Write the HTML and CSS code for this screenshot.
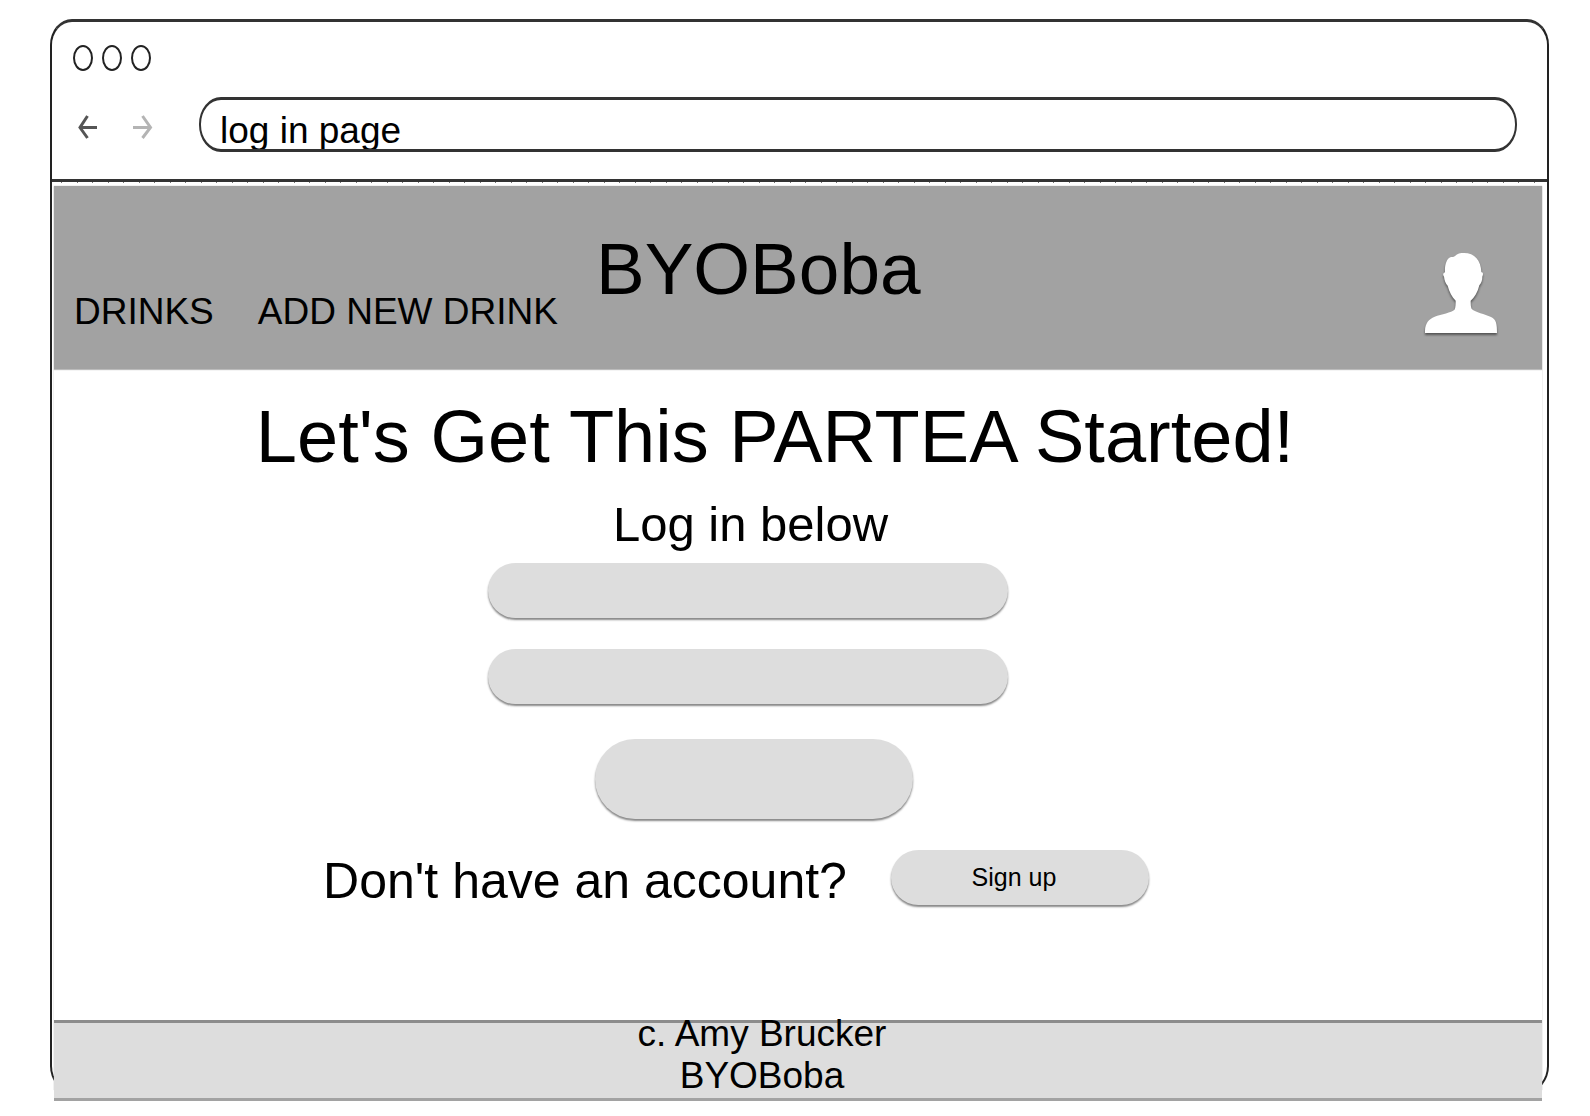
FILE: index.html
```html
<!DOCTYPE html>
<html lang="en">
<head>
<meta charset="utf-8">
<meta name="viewport" content="width=device-width, initial-scale=1">
<title>BYOBoba</title>
<link rel="stylesheet" href="styles.css">
</head>
<body>
<div class="window">
  <div class="chrome">
    <div class="dots"><span class="dot"></span><span class="dot"></span><span class="dot"></span></div>
    <div class="toolbar">
      <button class="arrow" type="button" aria-label="Back">
        <svg width="20" height="24" viewBox="0 0 20 24"><path d="M19 12.500H2M9.500 1L2 12.500L9.500 23" fill="none" stroke="#555" stroke-width="3"/></svg>
      </button>
      <button class="arrow" type="button" aria-label="Forward">
        <svg width="20" height="24" viewBox="0 0 20 24"><path d="M0 12.500H18M9.500 1L17.500 12.500L9.500 23" fill="none" stroke="#b4b4b4" stroke-width="3"/></svg>
      </button>
      <input class="address" type="text" value="log in page" aria-label="Address">
    </div>
  </div>
  <div class="ticks"></div>
  <div class="page">
    <header class="header">
      <nav class="nav">
        <a href="#">DRINKS</a>
        <a href="#">ADD NEW DRINK</a>
      </nav>
      <div class="brand">BYOBoba</div>
      <a class="profile" href="#" aria-label="Profile">
        <svg width="72" height="80" viewBox="105 98 216 241" preserveAspectRatio="none"><path fill="#fff" d="M105 339C104 312 114 298 134 290C154 282 184 278 194 268C197 262 197 250 197 242C186 231 178 216 173 197C167 190 163 180 162 169C158 164 159 158 165 156C164 136 169 116 181 111C186 109 190 112 195 107C202 99 211 98 222 98C254 98 273 120 274 156C280 156 280 162 277 169C277 180 274 190 268 195C263 216 253 232 242 242C242 252 242 260 245 267C257 278 284 282 303 291C319 299 321 312 321 339Z"/></svg>
      </a>
    </header>
    <main class="main">
      <h1 class="headline">Let's Get This PARTEA Started!</h1>
      <form class="login">
        <h2 class="prompt">Log in below</h2>
        <input class="field" type="text" aria-label="Username">
        <input class="field" type="password" aria-label="Password">
        <button class="submit" type="button" aria-label="Log in"></button>
      </form>
      <div class="signup">
        <p class="question">Don't have an account?</p>
        <button class="signup-button" type="button">Sign up</button>
      </div>
    </main>
    <footer class="footer">
      <p class="credit">c. Amy Brucker<br>BYOBoba</p>
    </footer>
  </div>
</div>
</body>
</html>
```
FILE: styles.css
```css
* { box-sizing: border-box; }

body {
  margin: 0;
  padding: 19px 41px 24px 50px;
  background: #fff;
  color: #000;
  font-family: "Liberation Sans", Arial, sans-serif;
}

h1, h2, p { margin: 0; font-weight: 400; }
a { color: inherit; text-decoration: none; }
button, input { font-family: inherit; color: inherit; }
svg { display: block; }

.window {
  display: flex;
  flex-direction: column;
  min-height: calc(100vh - 43px);
  border: 2px solid #222;
  border-top: 3px solid #333;
  border-radius: 22px / 26px;
}

.chrome {
  padding: 23px 30px 27px 21px;
  border-bottom: 3px solid #333;
}
.dots { display: flex; gap: 9px; }
.dot {
  width: 20px;
  height: 26px;
  border: 2px solid #222;
  border-radius: 50%;
}
.toolbar {
  display: flex;
  align-items: center;
  gap: 35px;
  margin-top: 26px;
  padding-left: 5px;
}
.arrow { padding: 4px 0 0; border: 0; background: none; }
.address {
  flex: 1;
  min-width: 0;
  height: 55px;
  margin-left: 11px;
  padding: 12px 19px 0;
  border: 2px solid #333;
  border-width: 3px 2px;
  border-radius: 22px / 27px;
  background: #fff;
  font-size: 37px;
}

.ticks {
  height: 4px;
  background: repeating-linear-gradient(90deg, transparent 0 9px, #777 9px 10px, transparent 10px 25px, #777 25px 26px, transparent 26px 31px) 0 0 / 100% 1px no-repeat;
}

.page {
  flex: 1;
  display: flex;
  flex-direction: column;
  margin: 0 5px 0 2px;
  box-shadow: 0 0 1px #aaa;
}

.header {
  position: relative;
  display: flex;
  align-items: flex-start;
  height: 183px;
  padding: 0 45px 0 20px;
  background: #a2a2a2;
  box-shadow: 0 1px 1px #bbb;
}
.nav {
  display: flex;
  gap: 44px;
  padding-top: 105px;
  font-size: 37px;
  line-height: 42px;
  white-space: nowrap;
}
.brand {
  margin-left: 38px;
  padding-top: 41px;
  font-size: 73px;
  line-height: 84px;
}
.profile {
  margin: 67px 0 0 auto;
  filter: drop-shadow(0 2px 1px #555);
}

.main {
  flex: 1;
  display: flex;
  flex-direction: column;
  align-items: center;
  padding: 26px 100px 0 0;
  background: #fff;
}
.headline {
  margin-left: 54px;
  font-size: 74px;
  line-height: 84px;
}
.login {
  display: flex;
  flex-direction: column;
  align-items: center;
  margin-top: 17px;
}
.prompt {
  margin-bottom: 11px;
  padding-left: 5px;
  font-size: 49px;
  line-height: 56px;
}
.field, .submit, .signup-button {
  border: 0;
  background: #ddd;
  box-shadow: 0 2px 2px #888;
}
.field {
  width: 520px;
  height: 55px;
  margin-bottom: 31px;
  padding: 0 28px;
  border-radius: 28px;
  font-size: 25px;
}
.submit {
  width: 318px;
  height: 80px;
  margin: 4px 0 0 12px;
  border-radius: 40px;
}
.signup {
  display: flex;
  align-items: flex-start;
  gap: 44px;
  margin: 31px 24px 0 0;
}
.question { font-size: 50px; line-height: 62px; }
.signup-button {
  width: 258px;
  height: 55px;
  padding: 0 12px 0 0;
  border-radius: 28px;
  font-size: 25px;
}

.footer {
  position: relative;
  height: 81px;
  margin-bottom: -11px;
  padding-right: 72px;
  border-top: 3px solid #8c8c8c;
  border-bottom: 3px solid #a2a2a2;
  background: #ddd;
  text-align: center;
}
.credit {
  margin-top: -10px;
  font-size: 37px;
  line-height: 42px;
}
```
